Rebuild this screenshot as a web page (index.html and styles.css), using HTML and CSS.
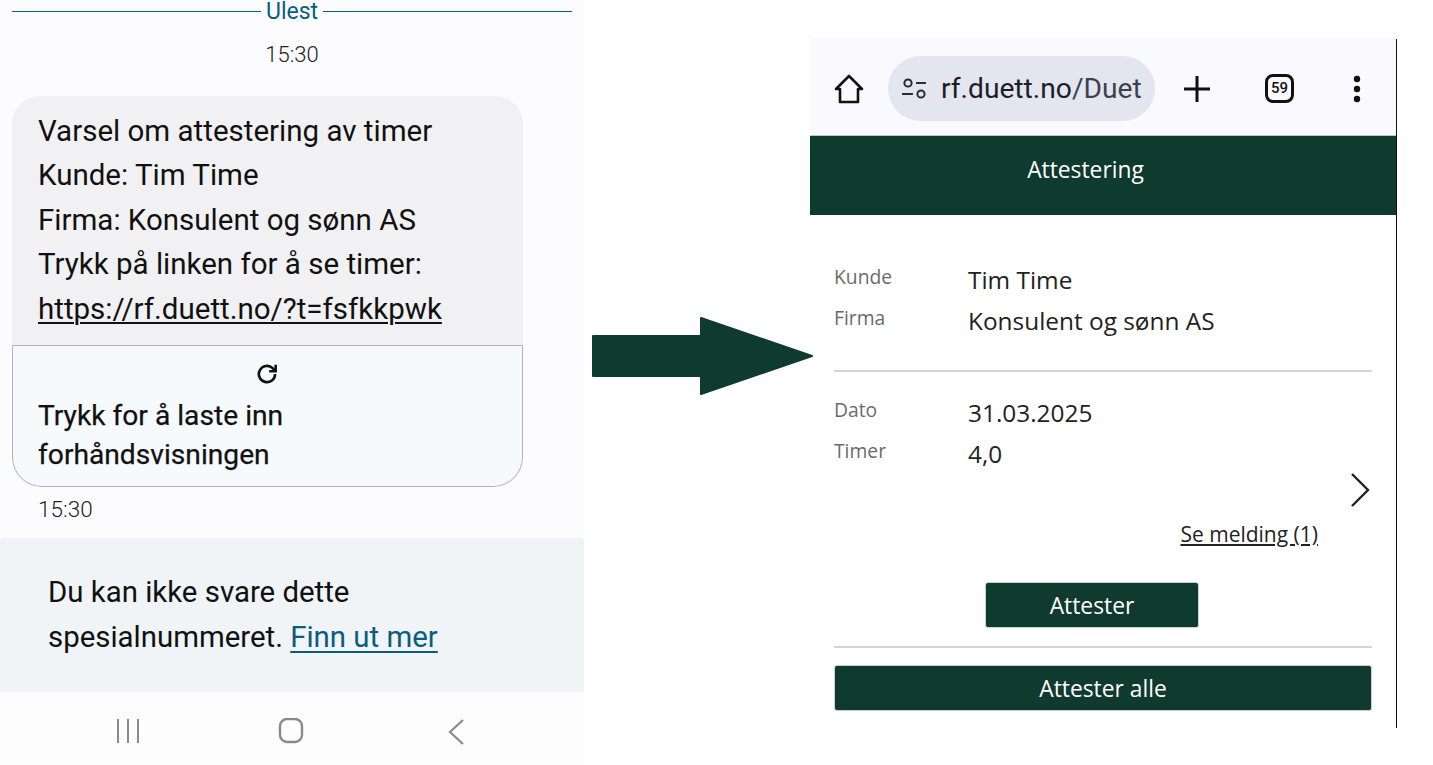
FILE: index.html
```html
<!DOCTYPE html>
<html lang="en">
<head>
    <meta charset="UTF-8">
    <meta name="viewport" content="width=device-width, initial-scale=1.0">
    <title>Attestering</title>
    <link rel="stylesheet" href="styles.css">
</head>
<body>

<div class="page">

    <!-- SMS screenshot -->
    <section class="sms">
        <div class="sms-thread">
            <div class="unread"><span>Ulest</span></div>
            <div class="stamp-center">15:30</div>

            <div class="bubble">
                <div class="bubble-text">
                    <p>Varsel om attestering av timer</p>
                    <p>Kunde: Tim Time</p>
                    <p>Firma: Konsulent og sønn AS</p>
                    <p>Trykk på linken for å se timer:</p>
                    <p><a href="#" class="sms-link">https://rf.duett.no/?t=fsfkkpwk</a></p>
                </div>
                <div class="preview">
                    <svg class="reload" viewBox="0 0 24 24" width="26" height="26" fill="none" stroke="#111" stroke-width="2.4">
                        <path d="M19.5 12a7.5 7.5 0 1 1-2.3-5.4L19.5 9"/>
                        <path d="M20 3.5V9.5H14" stroke-linejoin="miter"/>
                    </svg>
                    <p>Trykk for å laste inn</p>
                    <p>forhåndsvisningen</p>
                </div>
            </div>
            <div class="stamp-left">15:30</div>
        </div>

        <div class="no-reply">
            <p>Du kan ikke svare dette</p>
            <p>spesialnummeret. <a href="#" class="more-link">Finn ut mer</a></p>
        </div>

        <nav class="android-nav">
            <svg viewBox="0 0 26 26" width="26" height="26" stroke="#8a8a8a" stroke-width="2" fill="none">
                <path d="M3 1V25M13 1V25M23 1V25"/>
            </svg>
            <svg viewBox="0 0 26 26" width="26" height="26" stroke="#8a8a8a" stroke-width="2.4" fill="none">
                <rect x="2" y="1" width="22" height="23" rx="7"/>
            </svg>
            <svg class="nav-back" viewBox="0 0 18 28" width="18" height="28" stroke="#8a8a8a" stroke-width="2.2" fill="none">
                <path d="M16 2L3 14L16 26"/>
            </svg>
        </nav>
    </section>

    <!-- Arrow between the two screenshots -->
    <div class="arrow-col">
        <svg viewBox="0 0 222 78" width="222" height="78">
            <path d="M1 19H109V1L220 39L109 77V59H1Z" fill="#0f3a2e" stroke="#0f3a2e" stroke-width="2" stroke-linejoin="round"/>
        </svg>
    </div>

    <!-- Browser screenshot -->
    <section class="browser">
        <div class="toolbar">
            <svg class="tool-home" viewBox="0 0 30 30" width="30" height="30" fill="none" stroke="#111" stroke-width="2.6" stroke-linejoin="round">
                <path d="M2 15L15 2L28 15H24V28H6V15Z"/>
            </svg>
            <div class="urlbar">
                <svg viewBox="0 0 26 22" width="26" height="22" fill="none" stroke="#2a2d36" stroke-width="2">
                    <circle cx="7" cy="5" r="3.6"/>
                    <path d="M15 5H25M1 16H12"/>
                    <circle cx="20" cy="16" r="3.6"/>
                </svg>
                <span class="url"><span class="url-host">rf.duett.no</span>/Duet</span>
            </div>
            <svg class="tool-plus" viewBox="0 0 28 28" width="28" height="28" stroke="#111" stroke-width="3" fill="none">
                <path d="M14 1V27M1 14H27"/>
            </svg>
            <div class="tabs">59</div>
            <svg class="tool-menu" viewBox="0 0 8 28" width="8" height="28" fill="#111">
                <circle cx="4" cy="4" r="3.2"/>
                <circle cx="4" cy="14" r="3.2"/>
                <circle cx="4" cy="24" r="3.2"/>
            </svg>
        </div>

        <header class="title-bar">Attestering</header>

        <div class="content">
            <dl class="fields">
                <dt>Kunde</dt><dd>Tim Time</dd>
                <dt>Firma</dt><dd>Konsulent og sønn AS</dd>
            </dl>
            <hr class="rule">
            <dl class="fields fields-second">
                <dt>Dato</dt><dd>31.03.2025</dd>
                <dt>Timer</dt><dd>4,0</dd>
            </dl>
            <div class="next-row">
                <svg viewBox="0 0 20 34" width="20" height="34" fill="none" stroke="#222" stroke-width="2.4">
                    <path d="M2 1L18 17L2 33"/>
                </svg>
            </div>
            <div class="message-row"><a href="#" class="message-link">Se melding (1)</a></div>
            <div class="single-row"><button type="button" class="button button-single">Attester</button></div>
            <hr class="rule rule-low">
            <button type="button" class="button button-all">Attester alle</button>
        </div>
    </section>

</div>

</body>
</html>
```

FILE: styles.css
```css
* {
    margin: 0;
    padding: 0;
    box-sizing: border-box;
}
body {
    background-color: white;
    overflow: hidden;
}
.page {
    display: flex;
    height: 765px;
    align-items: flex-start;
}

/* SMS side */
.sms {
    width: 584px;
    height: 765px;
    display: flex;
    flex-direction: column;
    font-family: Roboto, sans-serif;
    color: #111;
}
.sms-thread {
    height: 538px;
    background-color: #fcfcfe;
    padding: 0 12px;
}
.unread {
    height: 23px;
    display: flex;
    align-items: center;
    gap: 5px;
    color: #0b5d7e;
    font-size: 23px;
    line-height: 23px;
}
.unread::before,
.unread::after {
    content: "";
    height: 1px;
    background-color: #0b5d7e;
}
.unread::before {
    width: 249px;
}
.unread::after {
    flex: 1;
}
.stamp-center {
    margin-top: 19px;
    height: 26px;
    text-align: center;
    font-size: 22px;
    font-weight: 300;
    line-height: 26px;
    color: #222;
}
.bubble {
    width: 511px;
    margin-top: 28px;
    border-radius: 28px;
    background-color: #f1f1f3;
    overflow: hidden;
}
.bubble-text {
    height: 249px;
    padding: 13px 26px 0;
    font-size: 29.5px;
    line-height: 44.4px;
}
.sms-link {
    color: #111;
    text-decoration-thickness: 2px;
    text-underline-offset: 3px;
}
.preview {
    height: 142px;
    padding: 0 25px;
    background-color: #f7fafd;
    border: 1px solid #adb5bc;
    border-radius: 0 0 30px 30px;
    font-size: 28.2px;
    line-height: 38.5px;
    -webkit-text-stroke: 0.25px #111;
}
.reload {
    display: block;
    margin: 15px 0 10px 216px;
}
.stamp-left {
    margin: 9px 0 0 26px;
    font-size: 22.5px;
    font-weight: 300;
    line-height: 26px;
    color: #222;
}
.no-reply {
    height: 154px;
    padding: 32px 48px 0;
    background-color: #f0f4f7;
    font-size: 29.4px;
    line-height: 45px;
    border-radius: 3px 3px 0 0;
}
.more-link {
    color: #0b5d7e;
    text-decoration-thickness: 2px;
    text-underline-offset: 4px;
}
.android-nav {
    flex: 1;
    background-color: #fdfdfe;
    display: flex;
    align-items: flex-start;
    padding: 26px 0 0 115px;
    gap: 137px;
}
.nav-back {
    margin-left: 6px;
}

/* Arrow */
.arrow-col {
    width: 226px;
    padding: 317px 0 0 8px;
    position: relative;
    z-index: 1;
}
.arrow-col svg {
    display: block;
}

/* Browser side */
.browser {
    width: 587px;
    height: 689px;
    margin-top: 39px;
    border-right: 1px solid #111;
    background-color: white;
    font-family: "Open Sans", sans-serif;
    color: #222;
}
.toolbar {
    height: 97px;
    background-color: #f9f9fe;
    border-bottom: 1px solid #bfc4c4;
    display: flex;
    align-items: center;
    padding: 3px 0 0 24px;
}
.urlbar {
    width: 267px;
    height: 65px;
    margin-left: 24px;
    padding-left: 13px;
    border-radius: 33px;
    background-color: #e3e6ef;
    display: flex;
    align-items: center;
    gap: 14px;
    font-family: Roboto, sans-serif;
    font-size: 28.2px;
    color: #3c4150;
    white-space: nowrap;
    overflow: hidden;
}
.url-host {
    color: #1c1f28;
}
.tool-plus {
    margin-left: 28px;
}
.tabs {
    width: 29px;
    height: 29px;
    margin-left: 54px;
    border: 3px solid #111;
    border-radius: 8px;
    font-family: Roboto, sans-serif;
    font-size: 15px;
    font-weight: 500;
    line-height: 23px;
    text-align: center;
    color: #111;
}
.tool-menu {
    margin-left: 59px;
}
.title-bar {
    height: 79px;
    background-color: #0f3a2e;
    color: white;
    font-size: 22.8px;
    line-height: 68px;
    text-align: center;
    padding-right: 35px;
}
.content {
    padding: 0 24px;
}
.fields {
    display: grid;
    grid-template-columns: 134px 1fr;
    grid-auto-rows: 41px;
    padding-top: 44px;
}
.fields dt {
    font-size: 19.3px;
    line-height: 36px;
    color: #6b6b6b;
}
.fields dd {
    font-size: 24.4px;
    line-height: 41px;
    color: #222;
}
.rule {
    border: none;
    height: 2px;
    background-color: #d4d4d4;
    margin-top: 29px;
}
.fields-second {
    padding-top: 20px;
}
.next-row {
    display: flex;
    justify-content: flex-end;
    margin-top: -1px;
    padding-right: 2px;
}
.message-row {
    height: 27px;
    margin-top: 14px;
    padding-right: 54px;
    text-align: right;
    line-height: 27px;
}
.message-link {
    color: #222;
    font-size: 21px;
}
.single-row {
    margin-top: 34px;
    padding-left: 151px;
}
.button {
    display: block;
    height: 46px;
    background-color: #0f3a2e;
    color: white;
    font-family: "Open Sans", sans-serif;
    font-size: 22.8px;
    border: 1px solid #c9d0ce;
    border-radius: 3px;
    cursor: pointer;
    text-align: center;
}
.button-single {
    width: 214px;
}
.rule-low {
    margin-top: 18px;
}
.button-all {
    width: 538px;
    margin-top: 17px;
}
```
